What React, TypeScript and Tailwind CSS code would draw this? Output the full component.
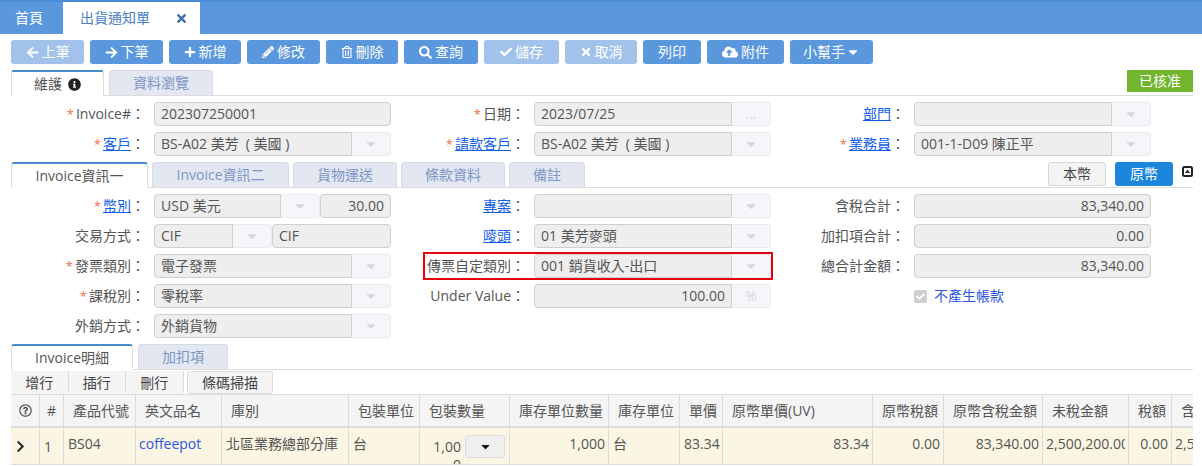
import type { ReactNode } from "react";
import {
  FaArrowLeft,
  FaArrowRight,
  FaCaretDown,
  FaCheck,
  FaChevronRight,
  FaCloudUploadAlt,
  FaInfoCircle,
  FaPencilAlt,
  FaPlus,
  FaRegQuestionCircle,
  FaRegTrashAlt,
  FaSearch,
  FaTimes,
} from "react-icons/fa";

const toolbar = [
  { label: "上筆", width: "w-[73px]", icon: <FaArrowLeft size={13} />, off: true },
  { label: "下筆", width: "w-[73px]", icon: <FaArrowRight size={13} /> },
  { label: "新增", width: "w-[72px]", icon: <FaPlus size={12} /> },
  { label: "修改", width: "w-[73px]", icon: <FaPencilAlt size={12} /> },
  { label: "刪除", width: "w-[72px]", icon: <FaRegTrashAlt size={12} /> },
  { label: "查詢", width: "w-[74px]", icon: <FaSearch size={13} /> },
  { label: "儲存", width: "w-[75px]", icon: <FaCheck size={12} />, off: true },
  { label: "取消", width: "w-[72px]", icon: <FaTimes size={12} />, off: true },
  { label: "列印", width: "w-[58px]" },
  { label: "附件", width: "w-[77px]", icon: <FaCloudUploadAlt size={16} /> },
  { label: "小幫手", width: "w-[83px]", caret: true },
];

const columns = [
  { head: "產品代號", value: "BS04", cell: "pl-[4px]" },
  { head: "英文品名", value: "coffeepot", cell: "pl-[3px] text-[#2a55e0]" },
  { head: "庫別", value: "北區業務總部分庫", cell: "pl-[4px]" },
  { head: "包裝單位", value: "台", cell: "pl-[4px]" },
  { head: "包裝數量", value: "", cell: "" },
  { head: "庫存單位數量", value: "1,000", cell: "pr-[3px] text-right" },
  { head: "庫存單位", value: "台", cell: "pl-[4px]" },
  { head: "單價", value: "83.34", cell: "pl-[4px]" },
  { head: "原幣單價(UV)", value: "83.34", cell: "pr-[3px] text-right" },
  { head: "原幣稅額", value: "0.00", cell: "pr-[3px] text-right" },
  { head: "原幣含稅金額", value: "83,340.00", cell: "pr-[3px] text-right" },
  { head: "未稅金額", value: "2,500,200.00", cell: "mr-[3px] pl-[3px]" },
  { head: "稅額", value: "0.00", cell: "pr-[3px] text-right" },
  { head: "含稅金額", value: "2,500,200.00", cell: "pl-[3px]" },
];

const gridCols =
  "grid-cols-[29px_24px_72px_86px_127px_71px_90px_99px_71px_43px_150px_71px_99px_86px_43px_90px]";

const Tab = ({ label, width, active, children }: { label: string; width: string; active?: boolean; children?: ReactNode }) => (
  <div
    className={
      active
        ? `${width} -mb-px flex h-[26px] items-center justify-center gap-[6px] rounded-t-[3px] border border-b-0 border-[#dcdcdc] border-t-2 border-t-[#4a8cc8] bg-white text-[#555]`
        : `${width} flex h-[25px] items-center justify-center rounded-t-[4px] border border-b-0 border-[#d6dae2] bg-[#e2e7f1] text-[#7e96c6]`
    }
  >
    {label}
    {children}
  </div>
);

const Box = ({ value, right, className = "" }: { value?: string; right?: boolean; className?: string }) => (
  <div
    className={`flex h-[24px] min-w-0 flex-1 items-center overflow-hidden rounded-[4px] border border-[#cfcfcf] bg-[#eeeeee] px-[6px] whitespace-pre text-[#555] ${
      right ? "justify-end" : ""
    } ${className}`}
  >
    {value}
  </div>
);

const Addon = ({ children, width = "w-[39px]" }: { children?: ReactNode; width?: string }) => (
  <div
    className={`flex h-[24px] ${width} shrink-0 items-center justify-center rounded-r-[4px] border border-l-0 border-[#e8eaef] bg-[#f5f6f9] text-[#d5d7dc]`}
  >
    {children ?? <FaCaretDown size={14} />}
  </div>
);

const Combo = ({ value, className = "" }: { value?: string; className?: string }) => (
  <div className={`flex min-w-0 flex-1 ${className}`}>
    <Box value={value} className="rounded-r-none" />
    <Addon />
  </div>
);

const Field = ({
  label,
  req,
  link,
  children,
}: {
  label?: string;
  req?: boolean;
  link?: boolean;
  children?: ReactNode;
}) => (
  <div className="relative flex h-[24px] items-center">
    <div className="flex w-[143px] shrink-0 items-center justify-end whitespace-nowrap pr-[9px] text-[#555]">
      {req && <span className="mr-[2px] text-[13px] text-[#ef6c50]">*</span>}
      {label && (link ? <span className="text-[#1060e8] underline">{label}</span> : <span>{label}</span>)}
      {label && <span>：</span>}
    </div>
    <div className="flex w-[237px] shrink-0 items-center">{children}</div>
  </div>
);

export default function App() {
  return (
    <div
      lang="zh-TW"
      className="h-[466px] w-[1202px] overflow-hidden bg-white font-['Open_Sans','Noto_Sans_CJK_TC',sans-serif] text-[14px] leading-[20px]"
    >
      <div className="flex h-[34px] items-end border-t-2 border-[#4a8bd8] bg-[#5b97dc]">
        <div className="flex h-full w-[63px] items-center pl-[15px] text-white">首頁</div>
        <div className="flex h-full w-[137px] items-center bg-white pl-[17px] text-[#4a80c4]">
          出貨通知單
          <FaTimes size={13} className="ml-[25px] text-[#3f6fa8]" />
        </div>
      </div>

      <div className="pr-[9px] pl-[11px]">
        <div className="mt-[6px] flex gap-[6px]">
          {toolbar.map((b) => (
            <div
              key={b.label}
              className={`flex h-[24px] ${b.width} items-center justify-center gap-[3px] rounded-[3px] text-white ${
                b.off ? "bg-[#a2c2ec] text-[#dfe9f7]" : "bg-[#5b97dc]"
              }`}
            >
              {b.icon}
              {b.label}
              {b.caret && <FaCaretDown size={14} className="-ml-[2px]" />}
            </div>
          ))}
        </div>

        <div className="mt-[6px] flex h-[26px] items-end gap-[5px] border-b border-[#dcdcdc]">
          <Tab label="維護" width="w-[93px]" active>
            <FaInfoCircle size={13} className="text-[#222]" />
          </Tab>
          <Tab label="資料瀏覽" width="w-[104px]" />
          <div className="mb-[3px] ml-auto flex h-[22px] w-[66px] items-center justify-center self-start bg-[#72b62e] text-white">
            已核准
          </div>
        </div>

        <div className="mt-[6px] grid grid-cols-[repeat(3,380px)] gap-y-[6px]">
          <Field label="Invoice#" req>
            <Box value="202307250001" />
          </Field>
          <Field label="日期" req>
            <Box value="2023/07/25" className="rounded-r-none" />
            <Addon>...</Addon>
          </Field>
          <Field label="部門" link>
            <Combo />
          </Field>
          <Field label="客戶" req link>
            <Combo value={"BS-A02 美芳\u2002( 美國 )"} />
          </Field>
          <Field label="請款客戶" req link>
            <Combo value={"BS-A02 美芳\u2002( 美國 )"} />
          </Field>
          <Field label="業務員" req link>
            <Combo value="001-1-D09 陳正平" />
          </Field>
        </div>

        <div className="mt-[6px] flex h-[26px] items-end gap-[4px] border-b border-[#dcdcdc]">
          <Tab label="Invoice資訊一" width="w-[137px]" active />
          <Tab label="Invoice資訊二" width="w-[137px]" />
          <Tab label="貨物運送" width="w-[104px]" />
          <Tab label="條款資料" width="w-[104px]" />
          <Tab label="備註" width="w-[76px]" />
          <div className="mb-px ml-auto flex h-[24px] w-[58px] items-center justify-center self-start rounded-[3px] border border-[#d5d5d5] bg-[#f4f4f4] text-[#444]">
            本幣
          </div>
          <div className="mb-px ml-[5px] flex h-[24px] w-[58px] items-center justify-center self-start rounded-[3px] bg-[#1b86dc] text-white">
            原幣
          </div>
          <svg viewBox="0 0 11 11" className="mb-[10px] ml-[5px] h-[11px] w-[11px] self-end">
            <rect x="1" y="1" width="9" height="9" rx="1.5" fill="#fff" stroke="#222" strokeWidth="2" />
            <path d="M5.5 3.4 8 7H3z" fill="#222" />
          </svg>
        </div>

        <div className="mt-[6px] grid grid-cols-[repeat(3,380px)] gap-y-[6px]">
          <Field label="幣別" req link>
            <Combo value="USD 美元" />
            <Box value="30.00" right className="w-[71px] flex-none" />
          </Field>
          <Field label="專案" link>
            <Combo />
          </Field>
          <Field label="含稅合計">
            <Box value="83,340.00" right />
          </Field>
          <Field label="交易方式">
            <Combo value="CIF" className="w-[118px] flex-none" />
            <Box value="CIF" />
          </Field>
          <Field label="嘜頭" link>
            <Combo value="01 美芳麥頭" />
          </Field>
          <Field label="加扣項合計">
            <Box value="0.00" right />
          </Field>
          <Field label="發票類別" req>
            <Combo value="電子發票" />
          </Field>
          <Field label="傳票自定類別">
            <Combo value="001 銷貨收入-出口" />
            <div className="pointer-events-none absolute -top-[2px] -right-[2px] -bottom-[2px] left-[32px] border-2 border-[#e8000b]" />
          </Field>
          <Field label="總合計金額">
            <Box value="83,340.00" right />
          </Field>
          <Field label="課稅別" req>
            <Combo value="零稅率" />
          </Field>
          <Field label="Under Value">
            <Box value="100.00" right className="rounded-r-none" />
            <Addon>%</Addon>
          </Field>
          <Field>
            <div className="flex items-center gap-[7px]">
              <div className="flex h-[13px] w-[13px] items-center justify-center rounded-[2px] bg-[#cfcfcf] text-white">
                <FaCheck size={9} />
              </div>
              <span className="text-[#2a55e0]">不產生帳款</span>
            </div>
          </Field>
          <Field label="外銷方式">
            <Combo value="外銷貨物" />
          </Field>
        </div>

        <div className="mt-[6px] flex h-[26px] items-end gap-[5px] border-b border-[#dcdcdc]">
          <Tab label="Invoice明細" width="w-[122px]" active />
          <Tab label="加扣項" width="w-[90px]" />
        </div>

        <div className="flex h-[24px] pt-px">
          {["增行", "插行", "刪行"].map((t) => (
            <div
              key={t}
              className="flex w-[57.5px] items-center justify-center rounded-b-[3px] border-r border-[#dcdcdc] bg-[#f4f4f4] text-[#444]"
            >
              {t}
            </div>
          ))}
          <div className="ml-[3.5px] flex w-[86px] items-center justify-center rounded-[3px] border border-[#dcdcdc] bg-[#f4f4f4] text-[#444]">
            條碼掃描
          </div>
        </div>

        <div className="overflow-hidden border-t border-[#dcdcdc]">
          <div className={`grid h-[33px] ${gridCols} border-b-2 border-[#dcdcdc] bg-[#f4f4f4] text-[#555]`}>
            <div className="flex items-center justify-center border-r border-[#dcdcdc]">
              <FaRegQuestionCircle size={13} />
            </div>
            <div className="flex items-center justify-center border-r border-[#dcdcdc]">#</div>
            {columns.map((c) => (
              <div key={c.head} className="flex items-center whitespace-nowrap border-r border-[#dcdcdc] pl-[9px]">
                {c.head}
              </div>
            ))}
          </div>
          <div className={`grid h-[37px] ${gridCols} border-b border-[#dcdcdc] bg-[#fbf6e3] text-[#555]`}>
            <div className="flex items-center border-r border-[#dcdcdc] pl-[3px] text-[#222]">
              <FaChevronRight size={13} />
            </div>
            <div className="flex items-center border-r border-[#dcdcdc] pt-[2px] pl-[4px]">1</div>
            {columns.map((c) =>
              c.head === "包裝數量" ? (
                <div key={c.head} className="flex overflow-hidden border-r border-[#dcdcdc] pt-[10px] pl-[3px] leading-[18px]">
                  <div className="w-[38px] shrink-0 break-all pl-[4px] text-right">1,000</div>
                  <div className="mt-[-3px] ml-[4px] flex h-[23px] w-[40px] shrink-0 items-center justify-center rounded-[3px] border border-[#dcdcdc] bg-[#efefef] text-[#111]">
                    <FaCaretDown size={13} />
                  </div>
                </div>
              ) : (
                <div key={c.head} className="min-w-0 border-r border-[#dcdcdc]">
                  <div className={`overflow-hidden whitespace-nowrap pt-[6px] ${c.cell}`}>{c.value}</div>
                </div>
              ),
            )}
          </div>
        </div>
      </div>
    </div>
  );
}
